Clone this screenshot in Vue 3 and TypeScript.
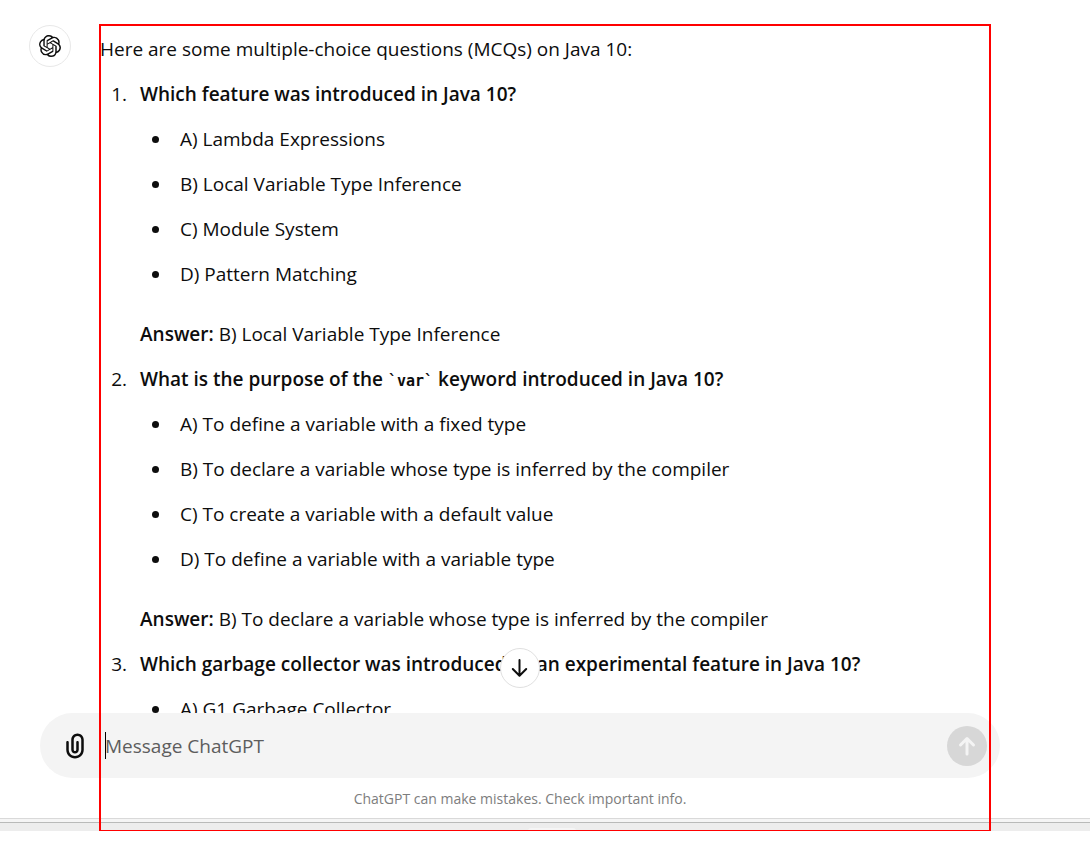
<script setup lang="ts">
import { ref } from 'vue'

interface TitlePart {
  text: string
  code?: boolean
}
interface Question {
  title: TitlePart[]
  options: string[]
  answer?: string
}

const draft = ref('')

const questions: Question[] = [
  {
    title: [{ text: 'Which feature was introduced in Java 10?' }],
    options: [
      'A) Lambda Expressions',
      'B) Local Variable Type Inference',
      'C) Module System',
      'D) Pattern Matching',
    ],
    answer: 'B) Local Variable Type Inference',
  },
  {
    title: [
      { text: 'What is the purpose of the ' },
      { text: '`var`', code: true },
      { text: ' keyword introduced in Java 10?' },
    ],
    options: [
      'A) To define a variable with a fixed type',
      'B) To declare a variable whose type is inferred by the compiler',
      'C) To create a variable with a default value',
      'D) To define a variable with a variable type',
    ],
    answer: 'B) To declare a variable whose type is inferred by the compiler',
  },
  {
    title: [{ text: 'Which garbage collector was introduced as an experimental feature in Java 10?' }],
    options: ['A) G1 Garbage Collector'],
  },
]
</script>

<template>
  <div class="screen">
    <main class="conversation">
      <div class="avatar">
        <svg viewBox="0 0 24 24" width="22" height="22" fill="currentColor" aria-hidden="true">
          <path d="M22.2819 9.8211a5.9847 5.9847 0 0 0-.5157-4.9108 6.0462 6.0462 0 0 0-6.5098-2.9A6.0651 6.0651 0 0 0 4.9807 4.1818a5.9847 5.9847 0 0 0-3.9977 2.9 6.0462 6.0462 0 0 0 .7427 7.0966 5.98 5.98 0 0 0 .511 4.9107 6.051 6.051 0 0 0 6.5146 2.9001A5.9847 5.9847 0 0 0 13.2599 24a6.0557 6.0557 0 0 0 5.7718-4.2058 5.9894 5.9894 0 0 0 3.9977-2.9001 6.0557 6.0557 0 0 0-.7475-7.0729zm-9.022 12.6081a4.4755 4.4755 0 0 1-2.8764-1.0408l.1419-.0804 4.7783-2.7582a.7948.7948 0 0 0 .3927-.6813v-6.7369l2.02 1.1686a.071.071 0 0 1 .038.052v5.5826a4.504 4.504 0 0 1-4.4945 4.4944zm-9.6607-4.1254a4.4708 4.4708 0 0 1-.5346-3.0137l.142.0852 4.783 2.7582a.7712.7712 0 0 0 .7806 0l5.8428-3.3685v2.3324a.0804.0804 0 0 1-.0332.0615L9.74 19.9502a4.4992 4.4992 0 0 1-6.1408-1.6464zM2.3408 7.8956a4.485 4.485 0 0 1 2.3655-1.9728V11.6a.7664.7664 0 0 0 .3879.6765l5.8144 3.3543-2.0201 1.1685a.0757.0757 0 0 1-.071 0l-4.8303-2.7865A4.504 4.504 0 0 1 2.3408 7.872zm16.5963 3.8558L13.1038 8.364 15.1192 7.2a.0757.0757 0 0 1 .071 0l4.8303 2.7913a4.4944 4.4944 0 0 1-.6765 8.1042v-5.6772a.79.79 0 0 0-.407-.667zm2.0107-3.0231l-.142-.0852-4.7735-2.7818a.7759.7759 0 0 0-.7854 0L9.409 9.2297V6.8974a.0662.0662 0 0 1 .0284-.0615l4.8303-2.7866a4.4992 4.4992 0 0 1 6.6802 4.66zM8.3065 12.863l-2.02-1.1638a.0804.0804 0 0 1-.038-.0567V6.0742a4.4992 4.4992 0 0 1 7.3757-3.4537l-.142.0805L8.704 5.459a.7948.7948 0 0 0-.3927.6813zm1.0976-2.3654l2.602-1.4998 2.6069 1.4998v2.9994l-2.5974 1.4997-2.6067-1.4997Z" />
        </svg>
      </div>
      <article class="message">
        <p>Here are some multiple-choice questions (MCQs) on Java 10:</p>
        <ol class="questions">
          <li v-for="(question, i) in questions" :key="i" class="question">
            <div class="body">
              <p class="title">
                <template v-for="(part, j) in question.title" :key="j">
                  <code v-if="part.code">{{ part.text }}</code>
                  <template v-else>{{ part.text }}</template>
                </template>
              </p>
              <ul class="options">
                <li v-for="option in question.options" :key="option" class="option">{{ option }}</li>
              </ul>
              <p v-if="question.answer" class="answer"><strong>Answer:</strong> {{ question.answer }}</p>
            </div>
          </li>
        </ol>
      </article>
      <button class="scroll-down" type="button" aria-label="Scroll to bottom">
        <svg viewBox="0 0 24 24" width="24" height="24" fill="none" stroke="currentColor" stroke-width="2" stroke-linecap="round" stroke-linejoin="round" aria-hidden="true">
          <path d="M11.500 4V19.500M4.800 13L11.500 19.700L18.200 13" />
        </svg>
      </button>
    </main>

    <footer class="footer">
      <form class="composer" @submit.prevent>
        <button class="attach" type="button" aria-label="Attach files">
          <svg viewBox="0 0 24 24" width="30" height="30" fill="currentColor" aria-hidden="true">
            <path d="M9 7C9 4.23858 11.2386 2 14 2C16.7614 2 19 4.23858 19 7V15C19 18.866 15.866 22 12 22C8.13401 22 5 18.866 5 15V9C5 8.44772 5.44772 8 6 8C6.55228 8 7 8.44772 7 9V15C7 17.7614 9.23858 20 12 20C14.7614 20 17 17.7614 17 15V7C17 5.34315 15.6569 4 14 4C12.3431 4 11 5.34315 11 7V15C11 15.5523 11.4477 16 12 16C12.5523 16 13 15.5523 13 15V9C13 8.44772 13.4477 8 14 8C14.5523 8 15 8.44772 15 9V15C15 16.6569 13.6569 18 12 18C10.3431 18 9 16.6569 9 15V7Z" />
          </svg>
        </button>
        <span class="caret"></span>
        <input v-model="draft" class="prompt" type="text" placeholder="Message ChatGPT" aria-label="Message ChatGPT" />
        <button class="send" type="submit" aria-label="Send message">
          <svg viewBox="0 0 24 24" width="24" height="24" fill="none" stroke="currentColor" stroke-width="3" stroke-linecap="round" stroke-linejoin="round" aria-hidden="true">
            <path d="M12 20V5M5.500 11L12 4.500L18.500 11" />
          </svg>
        </button>
      </form>
      <p class="disclaimer">ChatGPT can make mistakes. Check important info.</p>
    </footer>

    <div class="window-edge"><span class="tab"></span></div>
    <div class="frame"></div>
  </div>
</template>

<style>
body {
  margin: 0;
  background: #fff;
}
</style>

<style scoped>
.screen {
  position: relative;
  display: flex;
  flex-direction: column;
  height: calc(100vh - 25px);
  color: #0d0d0d;
  font-family: "Open Sans", "Noto Sans", sans-serif;
  font-size: 19px;
  line-height: 30px;
}
p,
ol,
ul {
  margin: 0;
  padding: 0;
  list-style: none;
}
button {
  display: flex;
  align-items: center;
  justify-content: center;
  padding: 0;
  border: 0;
  background: none;
  color: inherit;
  flex: none;
}
.conversation {
  position: relative;
  flex: 1;
  min-height: 0;
  overflow: hidden;
  display: flex;
  align-items: flex-start;
  gap: 29px;
  padding: 25px 99px 0 29px;
}
.avatar {
  display: flex;
  align-items: center;
  justify-content: center;
  flex: none;
  box-sizing: border-box;
  width: 42px;
  height: 42px;
  border: 1px solid #e8e8e8;
  border-radius: 50%;
}
.message {
  flex: 1;
  min-width: 0;
  padding-top: 9px;
}
.questions {
  counter-reset: question;
}
.question {
  display: grid;
  grid-template-columns: 40px 1fr;
  margin-top: 15px;
  counter-increment: question;
}
.question::before {
  content: counter(question) ".";
  padding-right: 13px;
  text-align: right;
}
.title,
strong {
  font-weight: 600;
}
code {
  font-family: "DejaVu Sans Mono", monospace;
  font-size: 15px;
  font-weight: 700;
  line-height: 1;
}
.option {
  display: flex;
  align-items: center;
  gap: 21px;
  margin-top: 15px;
  padding-left: 12px;
}
.option::before {
  content: "";
  width: 7px;
  height: 7px;
  border-radius: 50%;
  background: #0d0d0d;
}
.answer {
  margin-top: 30px;
}
.scroll-down {
  position: absolute;
  bottom: 25px;
  left: calc(50% - 45px);
  width: 40px;
  height: 40px;
  border: 1px solid #e0e0e0;
  border-radius: 50%;
  background: #fff;
}
.footer {
  flex: none;
  padding: 0 90px 0 40px;
}
.composer {
  display: flex;
  align-items: center;
  height: 65px;
  box-sizing: border-box;
  padding: 0 13px 0 20px;
  border-radius: 33px;
  background: #f4f4f4;
}
.attach {
  width: 30px;
  margin-right: 15px;
}
.caret {
  width: 1px;
  height: 27px;
  margin-right: -1px;
  background: #000;
}
.prompt {
  flex: 1;
  min-width: 0;
  height: 30px;
  padding: 0;
  border: 0;
  outline: 0;
  background: none;
  color: inherit;
  font: inherit;
}
.prompt::placeholder {
  color: #5d5d5d;
  opacity: 1;
}
.send {
  width: 40px;
  height: 40px;
  border-radius: 50%;
  background: #d7d7d7;
  color: #f4f4f4;
}
.disclaimer {
  padding: 11px 0 10px;
  color: #7d7d7d;
  font-size: 14px;
  line-height: 19px;
  text-align: center;
}
.window-edge {
  flex: none;
  display: flex;
  justify-content: center;
  align-items: flex-end;
  box-sizing: border-box;
  height: 13px;
  border-top: 1px solid #d9d9d9;
  background: linear-gradient(#f5f5f5 3px, #b9bab9 3px, #b9bab9 4px, #ededed 4px);
}
.tab {
  width: 48px;
  height: 3px;
  margin-left: 14px;
  border-radius: 3px 3px 0 0;
  background: #f5f5f5;
}
.frame {
  position: absolute;
  inset: 24px 99px 0;
  border: 2px solid #f00;
  border-bottom-width: 1px;
  pointer-events: none;
}
</style>
